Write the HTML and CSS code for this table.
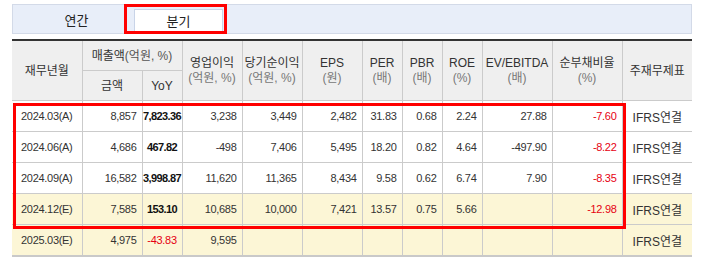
FILE: index.html
```html
<!DOCTYPE html>
<html lang="ko">
<head>
<meta charset="utf-8">
<link rel="stylesheet" href="styles.css">
</head>
<body>
<div class="wrap">
  <div class="tabs">
    <div class="tab">연간</div>
    <div class="tab active">분기</div>
  </div>
  <div class="hl tab-hl"></div>
  <table class="fin">
    <colgroup>
      <col class="w70"><col class="w60"><col class="w40"><col class="w60"><col class="w60"><col class="w60">
      <col class="w40"><col class="w40"><col class="w40"><col class="w70"><col class="w70"><col class="w70">
    </colgroup>
    <thead>
      <tr class="h1">
        <th rowspan="2" class="first">재무년월</th>
        <th colspan="2">매출액<span class="unit-in">(억원, %)</span></th>
        <th rowspan="2">영업이익<span class="unit">(억원, %)</span></th>
        <th rowspan="2">당기순이익<span class="unit">(억원, %)</span></th>
        <th rowspan="2">EPS<span class="unit">(원)</span></th>
        <th rowspan="2">PER<span class="unit">(배)</span></th>
        <th rowspan="2">PBR<span class="unit">(배)</span></th>
        <th rowspan="2">ROE<span class="unit">(%)</span></th>
        <th rowspan="2">EV/EBITDA<span class="unit">(배)</span></th>
        <th rowspan="2">순부채비율<span class="unit">(%)</span></th>
        <th rowspan="2" class="last">주재무제표</th>
      </tr>
      <tr class="h2">
        <th>금액</th>
        <th>YoY</th>
      </tr>
    </thead>
    <tbody>
      <tr>
        <td class="first date">2024.03(A)</td>
        <td class="num">8,857</td><td class="yoy b">7,823.36</td>
        <td class="num">3,238</td><td class="num">3,449</td><td class="num">2,482</td>
        <td class="num">31.83</td><td class="num">0.68</td><td class="num">2.24</td>
        <td class="num">27.88</td><td class="num neg">-7.60</td>
        <td class="last std">IFRS연결</td>
      </tr>
      <tr>
        <td class="first date">2024.06(A)</td>
        <td class="num">4,686</td><td class="yoy b">467.82</td>
        <td class="num">-498</td><td class="num">7,406</td><td class="num">5,495</td>
        <td class="num">18.20</td><td class="num">0.82</td><td class="num">4.64</td>
        <td class="num">-497.90</td><td class="num neg">-8.22</td>
        <td class="last std">IFRS연결</td>
      </tr>
      <tr>
        <td class="first date">2024.09(A)</td>
        <td class="num">16,582</td><td class="yoy b">3,998.87</td>
        <td class="num">11,620</td><td class="num">11,365</td><td class="num">8,434</td>
        <td class="num">9.58</td><td class="num">0.62</td><td class="num">6.74</td>
        <td class="num">7.90</td><td class="num neg">-8.35</td>
        <td class="last std">IFRS연결</td>
      </tr>
      <tr class="est">
        <td class="first date">2024.12(E)</td>
        <td class="num">7,585</td><td class="yoy b">153.10</td>
        <td class="num">10,685</td><td class="num">10,000</td><td class="num">7,421</td>
        <td class="num">13.57</td><td class="num">0.75</td><td class="num">5.66</td>
        <td class="num"></td><td class="num neg">-12.98</td>
        <td class="last std">IFRS연결</td>
      </tr>
      <tr class="est">
        <td class="first date">2025.03(E)</td>
        <td class="num">4,975</td><td class="yoy neg">-43.83</td>
        <td class="num">9,595</td><td class="num"></td><td class="num"></td>
        <td class="num"></td><td class="num"></td><td class="num"></td>
        <td class="num"></td><td class="num"></td>
        <td class="last std">IFRS연결</td>
      </tr>
    </tbody>
  </table>
  <div class="hl row-hl"></div>
</div>
</body>
</html>
```

FILE: styles.css
```css
html, body {
  margin: 0;
  padding: 0;
  background: #fff;
}
body {
  font-family: "Liberation Sans", "Noto Sans CJK KR", sans-serif;
  color: #333;
}
.wrap {
  position: relative;
  padding: 4px 10px 0 12px;
  width: 680px;
}
.tabs {
  box-sizing: border-box;
  height: 30px;
  border: 1px solid #d3dae8;
  background: #e8eef9;
  display: flex;
  align-items: flex-end;
  padding-left: 19px;
  gap: 13px;
}
.tab {
  box-sizing: border-box;
  width: 89px;
  height: 24px;
  line-height: 23px;
  text-align: center;
  font-size: 13px;
  color: #222;
}
.tab.active {
  background: #fff;
  border: 1px solid #c9d4e8;
  border-bottom: none;
}
.hl {
  position: absolute;
  box-sizing: border-box;
  border: 3px solid #ff0000;
  pointer-events: none;
}
.tab-hl {
  left: 124px;
  top: 4px;
  width: 103px;
  height: 30px;
}
.row-hl {
  left: 13px;
  top: 103px;
  width: 613px;
  height: 126px;
}
.fin {
  margin-top: 5px;
  width: 680px;
  table-layout: fixed;
  border-collapse: collapse;
  border-top: 2px solid #333;
  border-bottom: 2px solid #c9c9c9;
}
.w70 { width: 70px; }
.w60 { width: 60px; }
.w40 { width: 40px; }
.fin th {
  background: #efefef;
  font-weight: normal;
  font-size: 12px;
  line-height: 14px;
  color: #333;
  border: 1px solid #cbcbcb;
  padding: 0;
  white-space: nowrap;
}
.fin .h1 th { height: 29px; }
.fin .h2 th { height: 29px; }
.unit {
  display: block;
  margin-top: 1px;
  font-size: 12px;
  line-height: 14px;
  color: #777;
}
.unit-in {
  font-size: 12px;
  color: #555;
}
.fin td {
  border: 1px solid #cbcbcb;
  height: 30px;
  padding: 0 5px;
  font-size: 11px;
  letter-spacing: -0.3px;
  white-space: nowrap;
  color: #333;
}
.fin .first { border-left: none; }
.fin .last { border-right: none; }
.fin td.num { text-align: right; }
.fin td.yoy { text-align: center; padding: 0; }
.fin td.b { font-weight: bold; color: #111; letter-spacing: -0.6px; }
.fin td.neg { color: #e60012; }
.fin td.date {
  text-align: center;
  padding: 0;
}
.fin td.std {
  text-align: center;
  padding: 0;
  font-size: 12px;
  letter-spacing: 0;
}
.fin tr.est td { background: #fcf6d6; }
```
